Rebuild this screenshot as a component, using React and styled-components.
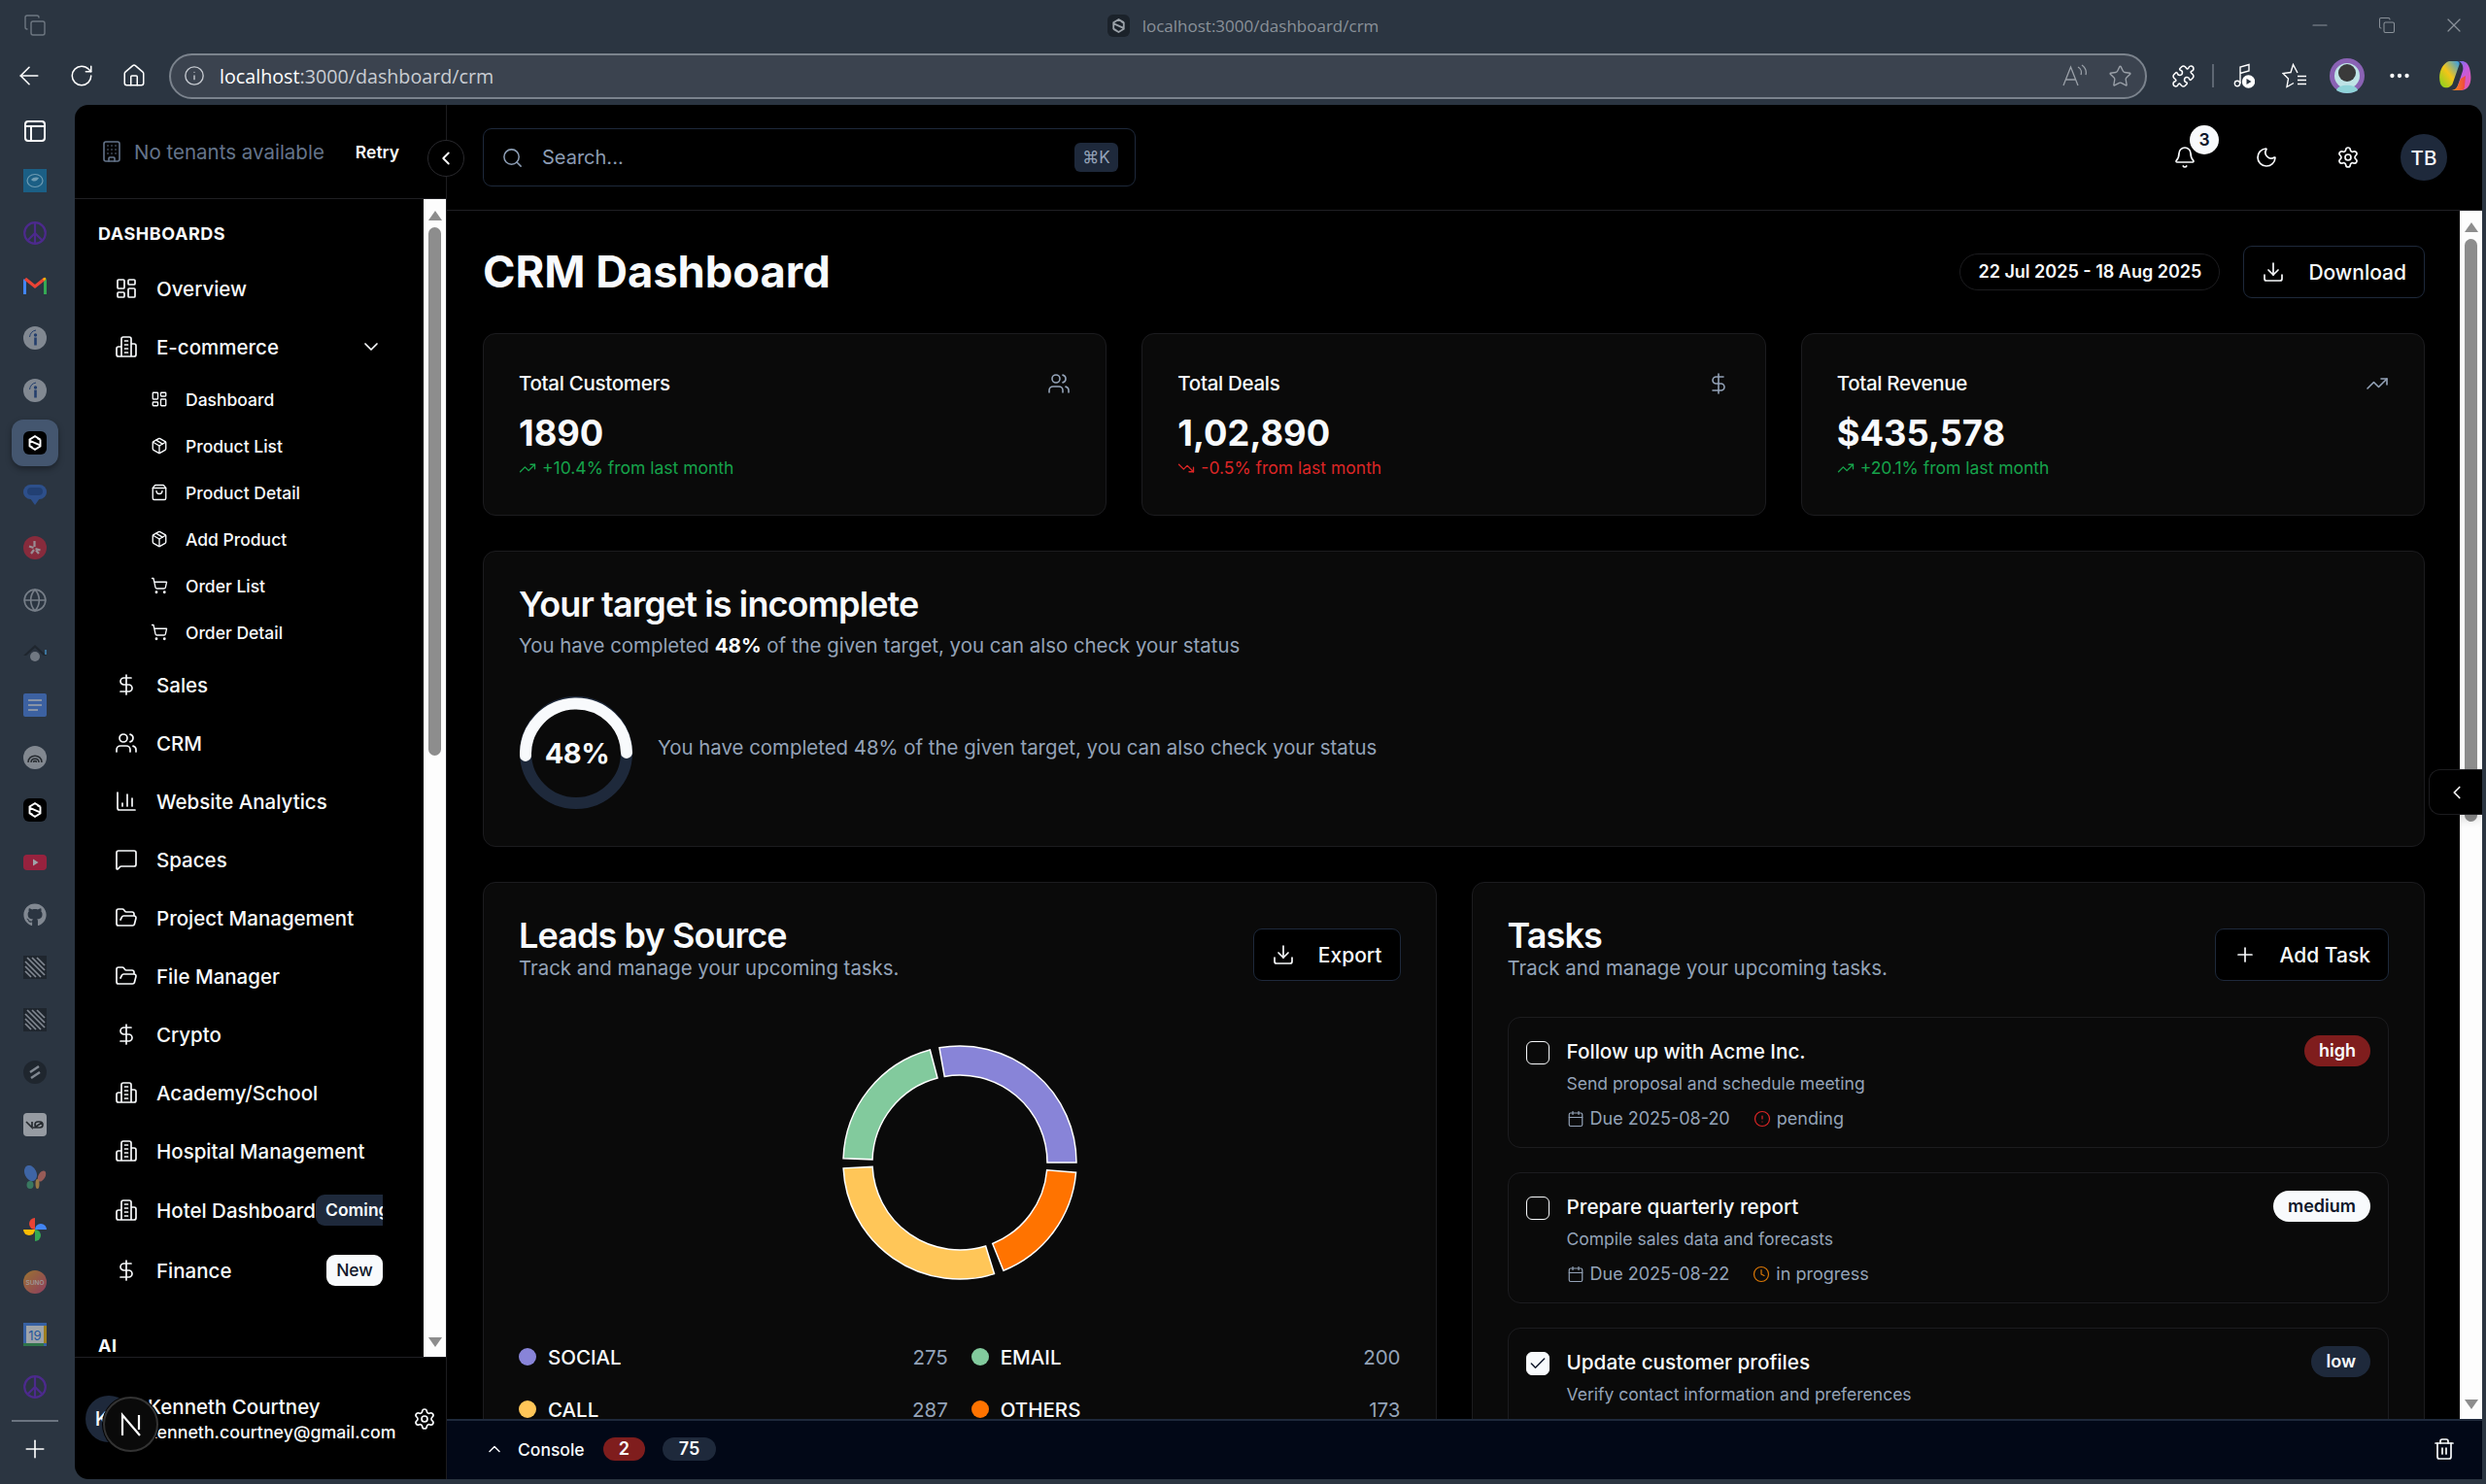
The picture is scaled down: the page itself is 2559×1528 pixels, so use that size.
import React from "react";
import styled, { createGlobalStyle } from "styled-components";
import {
  ArrowLeft, RotateCw, House, Info, Star, Puzzle, Ellipsis, Minus, X, Copy, Building, ChevronLeft, ChevronDown, ChevronUp,
  LayoutDashboard, Package, ShoppingBag, ShoppingCart, DollarSign, Users, ChartColumn, MessageSquare, FolderOpen,
  Settings, Search, Bell, Moon, Download, Plus, TrendingUp, TrendingDown, Calendar, CircleAlert, Clock, Check, Trash2, Globe,
} from "lucide-react";
import { FaGithub } from "react-icons/fa";

const GlobalStyle = createGlobalStyle`
  html, body { margin: 0; padding: 0; background: #2b3541; }
  * { box-sizing: border-box; }
  body { font-family: Inter, "Liberation Sans", sans-serif; color: #f8fafc; }
`;

const Windowed = styled.div`
  width: 2559px;
  height: 1528px;
  display: flex;
  flex-direction: column;
  overflow: hidden;
  background: #2b3541;
`;

/* browser chrome */
const TabStrip = styled.div`
  height: 52px;
  display: grid;
  grid-template-columns: 1fr auto 1fr;
  align-items: center;
  color: #8a9199;
`;
const TabsButton = styled.div`
  padding-left: 24px;
  display: flex;
  color: #6e7781;
`;
const PageTitle = styled.div`
  display: flex;
  align-items: center;
  gap: 13px;
  font: 400 17px "Open Sans", sans-serif;
`;
const WindowControls = styled.div`
  display: flex;
  justify-content: flex-end;
  align-items: center;
  gap: 48px;
  padding-right: 21px;
`;
const Toolbar = styled.div`
  height: 56px;
  display: flex;
  align-items: center;
  padding: 0 0 4px 3px;
`;
const ToolButton = styled.div`
  width: ${({ $w }) => $w || 52}px;
  height: 44px;
  flex: none;
  display: flex;
  align-items: center;
  justify-content: center;
  color: #fff;
`;
const AddressBar = styled.div`
  flex: 1;
  height: 47px;
  margin: 0 11px 0 9px;
  padding: 0 2px 0 13px;
  display: flex;
  align-items: center;
  border: 2px solid #7b838d;
  border-radius: 24px;
  background: #3b434f;
  color: #c6cad0;
`;
const Url = styled.div`
  margin-left: 15px;
  flex: 1;
  font: 400 19.7px "Open Sans", sans-serif;
  color: #c9cdd3;
  b { font-weight: 400; color: #fff; }
`;
const ToolDivider = styled.div`
  width: 2px;
  height: 24px;
  margin: 0 4px;
  background: #5d6672;
`;

/* left rail of the browser */
const Body = styled.div`
  flex: 1;
  min-height: 0;
  display: flex;
  padding: 0 4px 5px 0;
`;
const Rail = styled.div`
  width: 77px;
  flex: none;
  margin-top: -3px;
  padding-right: 5px;
  display: flex;
  flex-direction: column;
  align-items: center;
`;
const RailItem = styled.div`
  width: 48px;
  height: 54px;
  flex: none;
  display: flex;
  align-items: center;
  justify-content: center;
  opacity: ${({ $dim }) => ($dim ? 0.55 : 1)};
  &:first-child { padding-top: 6px; }
`;
const ActiveRailItem = styled.div`
  width: 48px;
  height: 48px;
  display: flex;
  align-items: center;
  justify-content: center;
  background: #44566f;
  border-radius: 12px;
  box-shadow: 0 3px 6px rgba(0, 0, 0, 0.35);
`;
const RailDivider = styled.div`
  width: 48px;
  height: 2px;
  margin: 7px 0 13px;
  background: #6b7480;
`;

/* app frame */
const AppFrame = styled.div`
  flex: 1;
  min-width: 0;
  display: flex;
  background: #000;
  border-radius: 14px 14px 0 14px;
  overflow: hidden;
`;
const Sidebar = styled.aside`
  width: 383px;
  flex: none;
  position: relative;
  display: flex;
  flex-direction: column;
  border-right: 1px solid #1c1c1f;
`;
const TenantHeader = styled.div`
  height: 97px;
  flex: none;
  display: flex;
  align-items: center;
  gap: 11px;
  padding-left: 26px;
  border-bottom: 1px solid #1f1f23;
  color: #64748b;
`;
const TenantText = styled.span`
  font-size: 20.5px;
  white-space: nowrap;
`;
const RetryText = styled.span`
  margin-left: 21px;
  font-size: 17.5px;
  font-weight: 600;
  color: #f8fafc;
`;
const CollapseButton = styled.div`
  position: absolute;
  top: 36px;
  right: -19px;
  width: 38px;
  height: 38px;
  z-index: 3;
  display: flex;
  align-items: center;
  justify-content: center;
  background: #000;
  border: 1px solid #29292d;
  border-radius: 50%;
  color: #fff;
`;
const NavArea = styled.div`
  flex: 1;
  min-height: 0;
  display: flex;
`;
const NavScroll = styled.nav`
  flex: 1;
  min-width: 0;
  overflow: hidden;
  padding: 20px 42px 0 24px;
`;
const SectionLabel = styled.div`
  height: 32px;
  line-height: 32px;
  font-size: 18px;
  font-weight: 700;
  letter-spacing: 0.55px;
  color: #f8fafc;
  margin-top: ${({ $top }) => $top || 0}px;
  margin-bottom: 10px;
`;
const NavRow = styled.div`
  height: ${({ $h }) => $h || 60}px;
  display: flex;
  align-items: center;
  gap: 19px;
  padding-left: 17px;
  overflow: hidden;
  font-size: 20.5px;
  font-weight: 500;
  white-space: nowrap;
  color: #f8fafc;
  svg { flex: none; }
`;
const SubRow = styled(NavRow)`
  height: 48px;
  padding-left: 54px;
  gap: 18px;
  font-size: 17.5px;
`;
const Chevron = styled.span`
  margin-left: auto;
  display: flex;
`;
const ComingBadge = styled.span`
  flex: none;
  margin-left: -19px;
  padding: 0 10px;
  height: 32px;
  line-height: 32px;
  font-size: 17.5px;
  font-weight: 600;
  border-radius: 9px;
  background: #1e293b;
  color: #f8fafc;
`;
const NewBadge = styled.span`
  margin-left: auto;
  width: 58px;
  height: 32px;
  line-height: 32px;
  text-align: center;
  font-size: 17.5px;
  font-weight: 500;
  border-radius: 9px;
  background: #f8fafc;
  color: #0f172a;
`;

/* classic scrollbars */
const ScrollTrack = styled.div`
  width: 23px;
  flex: none;
  display: flex;
  flex-direction: column;
  align-items: center;
  background: #fdfdfd;
  padding: 12px 0 10px;
`;
const Arrow = styled.div`
  flex: none;
  width: 0;
  height: 0;
  border-left: 7px solid transparent;
  border-right: 7px solid transparent;
  ${({ $down }) => ($down ? "border-top: 10px solid #8d8d8d;" : "border-bottom: 10px solid #8d8d8d;")}
`;
const Thumb = styled.div`
  width: 13px;
  flex: none;
  height: ${({ $h }) => $h}px;
  margin-top: ${({ $m }) => $m || 6}px;
  background: #8d8d8d;
  border-radius: 7px;
`;
const TrackGap = styled.div`
  flex: 1;
`;

/* sidebar footer */
const UserFooter = styled.div`
  height: 126px;
  flex: none;
  position: relative;
  display: flex;
  align-items: center;
  padding-left: 11px;
  border-top: 1px solid #1f1f23;
`;
const UserAvatar = styled.div`
  width: 48px;
  height: 48px;
  flex: none;
  border-radius: 50%;
  background: #1e293b;
  display: flex;
  align-items: center;
  justify-content: center;
  font-size: 20.5px;
  font-weight: 500;
`;
const UserText = styled.div`
  margin-left: 16px;
  flex: 1;
`;
const UserName = styled.div`
  font-size: 20.5px;
  line-height: 27px;
  font-weight: 500;
`;
const UserMail = styled.div`
  font-size: 17.8px;
  line-height: 24px;
  font-weight: 500;
  margin-top: 1px;
`;
const FooterGear = styled.div`
  display: flex;
  margin-right: 10px;
`;
const DevIndicator = styled.div`
  position: absolute;
  left: 29px;
  top: 40px;
  width: 57px;
  height: 57px;
  border-radius: 50%;
  background: #0a0a0a;
  border: 2px solid #333;
  display: flex;
  align-items: center;
  justify-content: center;
  box-shadow: 0 0 0 1px #000;
`;

/* main column */
const Main = styled.main`
  flex: 1;
  min-width: 0;
  position: relative;
  display: flex;
  flex-direction: column;
`;
const Topbar = styled.header`
  height: 109px;
  flex: none;
  display: flex;
  align-items: center;
  padding: 0 36px 0 37px;
  border-bottom: 1px solid #1f1f23;
`;
const SearchBox = styled.div`
  width: 672px;
  height: 60px;
  display: flex;
  align-items: center;
  padding: 0 17px 0 18px;
  gap: 19px;
  border: 1px solid #1e293b;
  border-radius: 9px;
  color: #8b9cb3;
  font-size: 20px;
`;
const Kbd = styled.span`
  margin-left: auto;
  width: 45px;
  height: 30px;
  line-height: 30px;
  text-align: center;
  font-size: 17px;
  border-radius: 6px;
  background: #1e293b;
  color: #94a3b8;
`;
const TopActions = styled.div`
  margin-left: auto;
  display: flex;
  align-items: center;
  gap: 24px;
`;
const IconButton = styled.div`
  position: relative;
  width: 60px;
  height: 60px;
  display: flex;
  align-items: center;
  justify-content: center;
  color: #f8fafc;
`;
const CountBadge = styled.span`
  position: absolute;
  top: -3px;
  right: -5px;
  width: 30px;
  height: 30px;
  line-height: 30px;
  text-align: center;
  border-radius: 50%;
  font-size: 17.5px;
  font-weight: 600;
  background: #f8fafc;
  color: #0f172a;
`;
const ScrollRow = styled.div`
  flex: 1;
  min-height: 0;
  display: flex;
`;
const Page = styled.div`
  flex: 1;
  min-width: 0;
  overflow: hidden;
  padding: 36px 36px 0 37px;
  display: flex;
  flex-direction: column;
  gap: 36px;
`;
const TitleRow = styled.div`
  display: flex;
  align-items: center;
  gap: 24px;
  flex: none;
`;
const PageHeading = styled.h1`
  margin: 0 auto 0 0;
  font-size: 45.3px;
  line-height: 54px;
  font-weight: 700;
`;
const DatePill = styled.div`
  height: 38px;
  line-height: 36px;
  padding: 0 18px;
  border: 1px solid #1c1c1f;
  border-radius: 19px;
  font-size: 18px;
  font-weight: 600;
  white-space: nowrap;
`;
const OutlineButton = styled.div`
  flex: none;
  height: 54px;
  display: flex;
  align-items: center;
  gap: 24px;
  padding: 0 18px;
  border: 1px solid #1e293b;
  border-radius: 9px;
  background: #000;
  font-size: 21px;
  font-weight: 500;
  white-space: nowrap;
`;
const StatGrid = styled.div`
  flex: none;
  display: grid;
  grid-template-columns: repeat(3, 1fr);
  gap: 36px;
`;
const Card = styled.section`
  flex: none;
  background: #0a0a0a;
  border: 1px solid #1c1c1f;
  border-radius: 13px;
  padding: 36px;
`;
const StatHead = styled.div`
  height: 42px;
  display: flex;
  justify-content: space-between;
  font-size: 20.5px;
  font-weight: 500;
  line-height: 30px;
  color: #94a3b8;
  span { color: #f8fafc; letter-spacing: -0.3px; }
  svg { margin-top: 3px; }
`;
const StatValue = styled.div`
  font-size: 36.3px;
  line-height: 48px;
  font-weight: 700;
`;
const StatDelta = styled.div`
  display: flex;
  align-items: center;
  gap: 6px;
  font-size: 17.5px;
  line-height: 24px;
  color: ${({ $down }) => ($down ? "#dc2626" : "#16a34a")};
`;
const CardTitle = styled.h2`
  margin: 0;
  font-size: 36px;
  line-height: 36px;
  font-weight: 600;
  letter-spacing: -0.9px;
`;
const CardSub = styled.p`
  margin: ${({ $gap }) => $gap || 0}px 0 0;
  font-size: 20.4px;
  line-height: 32px;
  color: #94a3b8;
  b { color: #f8fafc; font-weight: 700; }
`;
const TargetRow = styled.div`
  margin-top: 36px;
  height: 118px;
  display: flex;
  align-items: center;
  gap: 26px;
  padding-left: 1px;
`;
const Ring = styled.div`
  position: relative;
  width: 116px;
  height: 116px;
  flex: none;
  align-self: flex-start;
`;
const RingLabel = styled.div`
  position: absolute;
  inset: 0;
  padding-left: 2px;
  display: flex;
  align-items: center;
  justify-content: center;
  font-size: 29px;
  font-weight: 700;
  letter-spacing: -0.4px;
`;
const TargetText = styled.div`
  padding-bottom: 14px;
  font-size: 20.4px;
  color: #94a3b8;
`;
const TwoCols = styled.div`
  flex: none;
  display: grid;
  grid-template-columns: 1fr 1fr;
  gap: 36px;
`;
const CardHead = styled.div`
  display: flex;
  justify-content: space-between;
  align-items: flex-start;
`;
const HeadButton = styled(OutlineButton)`
  margin-top: 11px;
`;
const DonutBox = styled.div`
  margin-top: 34px;
  height: 300px;
  display: flex;
  justify-content: center;
`;
const Legend = styled.div`
  margin-top: 35px;
  display: grid;
  grid-template-columns: 1fr 1fr;
  gap: 24px;
`;
const LegendItem = styled.div`
  display: flex;
  align-items: center;
  height: 30px;
  gap: 12px;
  font-size: 20.5px;
  font-weight: 500;
`;
const Dot = styled.i`
  width: 18px;
  height: 18px;
  border-radius: 50%;
  background: ${({ $c }) => $c};
`;
const LegendValue = styled.span`
  margin-left: auto;
  font-weight: 400;
  color: #94a3b8;
`;
const TaskList = styled.div`
  margin-top: 34px;
  display: flex;
  flex-direction: column;
  gap: 25px;
`;
const TaskCard = styled.div`
  height: 135px;
  flex: none;
  display: flex;
  gap: 18px;
  padding: 18px;
  border: 1px solid #1c1c1f;
  border-radius: 13px;
`;
const TaskCheck = styled.div`
  width: 24px;
  height: 24px;
  margin-top: 6px;
  flex: none;
  display: flex;
  align-items: center;
  justify-content: center;
  border: 1.5px solid #f8fafc;
  border-radius: 6px;
  background: ${({ $on }) => ($on ? "#f8fafc" : "transparent")};
  color: #0f172a;
`;
const TaskBody = styled.div`
  flex: 1;
  min-width: 0;
`;
const TaskTop = styled.div`
  height: 32px;
  display: flex;
  align-items: center;
  justify-content: space-between;
  font-size: 20.7px;
  font-weight: 500;
`;
const Priority = styled.span`
  height: 32px;
  line-height: 32px;
  padding: 0 15px;
  border-radius: 16px;
  font-size: 18px;
  font-weight: 600;
  background: ${({ $bg }) => $bg};
  color: ${({ $fg }) => $fg};
`;
const TaskDesc = styled.div`
  margin-top: 6px;
  font-size: 17.5px;
  line-height: 24px;
  color: #94a3b8;
`;
const TaskMeta = styled.div`
  margin-top: 12px;
  display: flex;
  align-items: center;
  font-size: 18px;
  line-height: 24px;
  color: #94a3b8;
`;
const MetaBit = styled.span`
  display: flex;
  align-items: center;
  gap: 6px;
  margin-right: 24px;
`;
const ConsoleBar = styled.footer`
  height: 62px;
  flex: none;
  display: flex;
  align-items: center;
  padding: 0 27px 2px 39px;
  background: #020817;
  border-top: 2px solid #1e293b;
  font-size: 17.5px;
  font-weight: 500;
`;
const ConsoleLabel = styled.span`
  margin: 0 19px 0 14px;
`;
const ConsoleCount = styled.span`
  height: 24px;
  line-height: 24px;
  padding: 0 ${({ $pad }) => $pad}px;
  margin-right: 18px;
  border-radius: 12px;
  font-size: 18px;
  font-weight: 600;
  background: ${({ $bg }) => $bg};
`;
const ConsoleTrash = styled.div`
  margin-left: auto;
  display: flex;
`;
const SideTab = styled.div`
  position: absolute;
  right: 0;
  top: 684px;
  width: 55px;
  height: 47px;
  display: flex;
  align-items: center;
  padding-left: 17px;
  background: #000;
  border: 1px solid #1c1c1f;
  border-right: 0;
  border-radius: 12px 0 0 12px;
  box-shadow: 0 6px 8px rgba(0, 0, 0, 0.12);
  color: #fff;
`;

/* drawn brand marks and icons the packages lack */
const Mark = ({ size = 24, bg = "#000", fg = "#fff" }) => (
  <svg width={size} height={size} viewBox="0 0 24 24">
    <rect width="24" height="24" rx="6" fill={bg} />
    <path d="M17.5 8.5 12 5.2 6.5 8.5v6.6l3 1.8M6.8 9.8l10.4 4.6M6.5 15.5 12 18.8l5.5-3.3V9l-3-1.8" fill="none" stroke={fg} strokeWidth="1.9" />
  </svg>
);
const Tower = ({ size = 24 }) => (
  <svg width={size} height={size} viewBox="0 0 24 24" fill="none" stroke="currentColor" strokeWidth="1.7" strokeLinecap="round" strokeLinejoin="round">
    <path d="M7 22V4a2 2 0 0 1 2-2h6a2 2 0 0 1 2 2v18M7 12H4a2 2 0 0 0-2 2v6a2 2 0 0 0 2 2h16a2 2 0 0 0 2-2v-9a2 2 0 0 0-2-2h-3M10.500 6h3M10.500 10h3M10.500 14h3M10.500 18h3" />
  </svg>
);
const Peace = () => (
  <svg width="24" height="24" viewBox="0 0 24 24" fill="none" stroke="#4c2a8c" strokeWidth="2.2">
    <circle cx="12" cy="12" r="10.8" />
    <path d="M12 1.500v21M12 12 4.500 19.500M12 12l7.500 7.500" />
  </svg>
);
const InfoBlob = () => (
  <svg width="24" height="24" viewBox="0 0 24 24">
    <circle cx="12" cy="12" r="12" fill="#c8cdd4" />
    <circle cx="12.500" cy="9" r="1.7" fill="#1d4690" />
    <path d="M12.500 11.500v8" stroke="#1d4690" strokeWidth="2.6" />
    <path d="M6.500 11C7 7 9.500 4.500 13 4" stroke="#1d4690" fill="none" strokeWidth="1" />
  </svg>
);
const Stripes = () => (
  <svg width="24" height="24" viewBox="0 0 24 24">
    <rect width="24" height="24" fill="#161a20" />
    <path d="M4 2l18 18M2 6l16 16M9 2l13 13M2 11l11 11M14 2l8 8M2 16l6 6" stroke="#c8cdd4" strokeWidth="1.7" />
  </svg>
);

// every entry of the browser's vertical tab strip, top to bottom
const railIcons = [
  { art: <svg width="22" height="22" viewBox="0 0 22 22" fill="none" stroke="#fff" strokeWidth="2"><rect x="1" y="1" width="20" height="20" rx="3" /><path d="M1 6h20M7 6v15" /></svg> },
  { art: <svg width="24" height="24" viewBox="0 0 24 24"><rect width="24" height="24" fill="#1b5f85" /><ellipse cx="12" cy="12" rx="8" ry="6.5" fill="none" stroke="#6e9bb2" strokeWidth="1.2" /><path d="M8 11c2-3 6-3 8-2-1 3-5 5-8 2z" fill="#6e9bb2" /></svg> },
  { art: <Peace /> },
  { art: <svg width="24" height="20" viewBox="0 0 24 20" fill="none"><path d="M1.500 19V3.500" stroke="#4285f4" strokeWidth="3" /><path d="M22.500 19V3.500" stroke="#34a853" strokeWidth="3" /><path d="M2 3l10 8 10-8" stroke="#ea4335" strokeWidth="3.200" /><path d="M21 2.500l1.500 1.500" stroke="#fbbc04" strokeWidth="3" /></svg> },
  { art: <InfoBlob />, dim: true },
  { art: <InfoBlob />, dim: true },
  { active: true },
  { art: <svg width="24" height="24" viewBox="0 0 24 24"><rect y="1" width="24" height="15" rx="7.5" fill="#2f66c8" /><path d="M7 15h10l-5 7z" fill="#2f66c8" /><rect x="4" y="4" width="16" height="8" rx="4" fill="#1c4a9c" /></svg>, dim: true },
  { art: <svg width="24" height="24" viewBox="0 0 24 24"><circle cx="12" cy="12" r="12" fill="#d32338" /><path d="M11.500 5v6M12.500 13l5 1.500M11 14l-3 4M13 14.500l3 3.500M10.500 12 6 10.500" stroke="#f4d5d9" strokeWidth="2.2" /></svg>, dim: true },
  { art: <Globe size={26} color="#b4bac2" strokeWidth={1.5} />, dim: true },
  { art: <svg width="24" height="24" viewBox="0 0 24 24"><path d="M0 15 12 4l12 11-3 0L12 7 3 15z" fill="#161a20" /><circle cx="12" cy="16" r="5" fill="#aab0b8" /><rect x="22" y="9" width="2" height="5" fill="#4aa8e8" /></svg>, dim: true },
  { art: <svg width="24" height="24" viewBox="0 0 24 24"><rect width="24" height="24" rx="2" fill="#4a86f0" /><path d="M5 7h14M5 12h14M5 17h10" stroke="#d3e1fa" strokeWidth="2.2" /></svg>, dim: true },
  { art: <svg width="24" height="24" viewBox="0 0 24 24" fill="none" stroke="#222" strokeWidth="1.5"><circle cx="12" cy="12" r="12" fill="#c9cdd2" stroke="none" /><path d="M5 17c0-9 14-9 14 0M8 17c0-5 8-5 8 0M10.500 17c0-2 3-2 3 0" /></svg>, dim: true },
  { art: <Mark /> },
  { art: <svg width="24" height="16" viewBox="0 0 24 16"><rect width="24" height="16" rx="4" fill="#f0143c" /><path d="M10 4.500v7l5.500-3.500z" fill="#fff" /></svg>, dim: true },
  { art: <FaGithub size={24} color="#c8cdd4" />, dim: true },
  { art: <Stripes />, dim: true },
  { art: <Stripes />, dim: true },
  { art: <svg width="24" height="24" viewBox="0 0 24 24"><circle cx="12" cy="12" r="12" fill="#161a20" /><path d="M7 12l9-6M8 18l9-6" stroke="#c8cdd4" strokeWidth="2.4" /></svg>, dim: true },
  { art: <svg width="24" height="24" viewBox="0 0 24 24"><rect width="24" height="24" rx="4" fill="#eef0f2" /><path d="M3 9l6 6V9M10 15h7a2.500 2.500 0 0 0 0-6h-2a2.500 2.500 0 0 0 0 6M13 14l6-4" fill="none" stroke="#222" strokeWidth="1.7" /></svg>, dim: true },
  { art: <svg width="24" height="24" viewBox="0 0 24 24"><ellipse cx="7.500" cy="8" rx="6" ry="8.500" transform="rotate(-25 7.500 8)" fill="#4f8df7" /><ellipse cx="19" cy="11" rx="3.500" ry="6" transform="rotate(30 19 11)" fill="#f07a6a" /><ellipse cx="7" cy="20" rx="3.500" ry="4" fill="#46b07a" /><ellipse cx="14.500" cy="19" rx="2" ry="5" fill="#f2b04a" /></svg>, dim: true },
  { art: <svg width="24" height="24" viewBox="0 0 24 24"><path d="M12 12A6 6 0 0 1 12 0z" fill="#ea4335" /><path d="M12 12a6 6 0 0 1 12 0z" fill="#4285f4" /><path d="M12 12a6 6 0 0 1 0 12z" fill="#34a853" /><path d="M12 12A6 6 0 0 1 0 12z" fill="#fbbc04" /></svg> },
  { art: <svg width="24" height="24" viewBox="0 0 24 24"><defs><linearGradient id="suno" x1="0" y1="0" x2="1" y2="1"><stop offset="0" stopColor="#f5a623" /><stop offset="1" stopColor="#e0457b" /></linearGradient></defs><circle cx="12" cy="12" r="12" fill="url(#suno)" /><text x="12" y="14.5" textAnchor="middle" fontSize="6.5" fontFamily="Inter" fill="#fff">SUNO</text></svg>, dim: true },
  { art: <svg width="24" height="24" viewBox="0 0 24 24"><rect width="24" height="24" fill="#4285f4" /><rect x="3" y="3" width="18" height="18" fill="#fff" /><rect y="21" width="21" height="3" fill="#34a853" /><rect x="21" y="3" width="3" height="18" fill="#fbbc04" /><text x="12" y="17.5" textAnchor="middle" fontSize="13" fontFamily="Inter" fill="#1a73e8">19</text></svg>, dim: true },
  { art: <Peace /> },
];

const donut = [
  { c: "#8884d8", from: -10.1, to: 90 },
  { c: "#ff7300", from: 94.9, to: 158 },
  { c: "#ffc658", from: 162.8, to: 267.2 },
  { c: "#82ca9d", from: 272, to: 345.2 },
];
const polar = (r, deg) => {
  const a = (deg * Math.PI) / 180;
  return `${(150 + r * Math.sin(a)).toFixed(2)} ${(150 - r * Math.cos(a)).toFixed(2)}`;
};
const slicePath = ({ from, to }) => {
  const large = to - from > 180 ? 1 : 0;
  return `M${polar(120, from)}A120 120 0 ${large} 1 ${polar(120, to)}L${polar(90, to)}A90 90 0 ${large} 0 ${polar(90, from)}Z`;
};

const shop = [
  { icon: LayoutDashboard, label: "Dashboard" },
  { icon: Package, label: "Product List" },
  { icon: ShoppingBag, label: "Product Detail" },
  { icon: Package, label: "Add Product" },
  { icon: ShoppingCart, label: "Order List" },
  { icon: ShoppingCart, label: "Order Detail" },
];
const navRest = [
  { icon: DollarSign, label: "Sales" },
  { icon: Users, label: "CRM" },
  { icon: ChartColumn, label: "Website Analytics" },
  { icon: MessageSquare, label: "Spaces" },
  { icon: FolderOpen, label: "Project Management" },
  { icon: FolderOpen, label: "File Manager" },
  { icon: DollarSign, label: "Crypto" },
  { icon: Tower, label: "Academy/School" },
  { icon: Tower, label: "Hospital Management" },
];
const stats = [
  { label: "Total Customers", icon: Users, value: "1890", delta: "+10.4% from last month" },
  { label: "Total Deals", icon: DollarSign, value: "1,02,890", delta: "-0.5% from last month", down: true },
  { label: "Total Revenue", icon: TrendingUp, value: "$435,578", delta: "+20.1% from last month" },
];
const legend = [
  { c: "#8884d8", name: "SOCIAL", n: 275 },
  { c: "#82ca9d", name: "EMAIL", n: 200 },
  { c: "#ffc658", name: "CALL", n: 287 },
  { c: "#ff7300", name: "OTHERS", n: 173 },
];
const tasks = [
  { title: "Follow up with Acme Inc.", desc: "Send proposal and schedule meeting", due: "Due 2025-08-20", status: "pending", statusIcon: CircleAlert, statusColor: "#dc2626", level: "high", bg: "#7f1d1d", fg: "#f8fafc" },
  { title: "Prepare quarterly report", desc: "Compile sales data and forecasts", due: "Due 2025-08-22", status: "in progress", statusIcon: Clock, statusColor: "#d97706", level: "medium", bg: "#f8fafc", fg: "#0f172a" },
  { title: "Update customer profiles", desc: "Verify contact information and preferences", due: "Due 2025-08-25", status: "completed", statusIcon: Check, statusColor: "#16a34a", level: "low", bg: "#1e293b", fg: "#f8fafc", done: true },
];

const FakeScrollbar = ({ thumb, topGap }) => (
  <ScrollTrack>
    <Arrow />
    <Thumb $h={thumb} $m={topGap} />
    <TrackGap />
    <Arrow $down />
  </ScrollTrack>
);

const App = () => (
  <Windowed>
    <GlobalStyle />
    <TabStrip>
      <TabsButton>
        <Copy size={24} strokeWidth={1.4} />
      </TabsButton>
      <PageTitle>
        <Mark size={23} bg="#1b222a" fg="#9aa1a8" />
        localhost:3000/dashboard/crm
      </PageTitle>
      <WindowControls>
        <Minus size={24} strokeWidth={1.2} />
        <Copy size={18} strokeWidth={1.4} />
        <X size={24} strokeWidth={1.2} />
      </WindowControls>
    </TabStrip>
    <Toolbar>
      <ToolButton $w={54}><ArrowLeft size={30} strokeWidth={1.3} /></ToolButton>
      <ToolButton $w={54}><RotateCw size={26} strokeWidth={1.4} /></ToolButton>
      <ToolButton $w={54}><House size={26} strokeWidth={1.4} /></ToolButton>
      <AddressBar>
        <Info size={22} strokeWidth={1.5} />
        <Url><b>localhost</b>:3000/dashboard/crm</Url>
        <ToolButton $w={47}><svg width="26" height="24" viewBox="0 0 26 24" fill="none" stroke="#9ba1a9" strokeWidth="1.3"><path d="M1 22 8.500 3 16 22M3.500 16h10M16 3c3 1.500 4 5 3 8M20 1c3.500 2.500 5 6 4 10" /></svg></ToolButton>
        <ToolButton $w={47}><Star size={25} strokeWidth={1.3} color="#9ba1a9" /></ToolButton>
      </AddressBar>
      <ToolButton><Puzzle size={25} strokeWidth={1.5} /></ToolButton>
      <ToolDivider />
      <ToolButton $w={54}>
        <svg width="22" height="26" viewBox="0 0 22 26" fill="none" stroke="#fff" strokeWidth="1.4"><circle cx="4" cy="21" r="2.700" /><path d="M7 21V4l9-2.500V8l-9 2.500" /><circle cx="15.500" cy="19" r="6" fill="#fff" /><path d="M13.500 16v6l5-3z" fill="#2b3541" stroke="none" /></svg>
      </ToolButton>
      <ToolButton $w={50}>
        <svg width="26" height="26" viewBox="0 0 26 26" fill="none" stroke="#fff" strokeWidth="1.4"><path d="M16 10 11.500 1.500 9 9.500 1 10.500l5.500 5.500-1.500 8.500 7-4M16 13.500h9M16 17.500h9M16 21.500h9" /></svg>
      </ToolButton>
      <ToolButton $w={58}>
        <svg width="36" height="36" viewBox="0 0 36 36">
          <circle cx="18" cy="18" r="18" fill="#8a62b4" />
          <circle cx="18" cy="18" r="13" fill="#bfe3e6" />
          <circle cx="18" cy="15" r="9" fill="#3a3a3a" />
          <path d="M7 33c1-7 21-7 22 0-6 4-16 4-22 0z" fill="#8fd3d8" />
        </svg>
      </ToolButton>
      <ToolButton $w={50}><Ellipsis size={26} strokeWidth={2} /></ToolButton>
      <ToolButton $w={64}>
        <svg width="34" height="32" viewBox="0 0 34 32">
          <defs>
            <linearGradient id="copilotA" x1="0" y1="1" x2="1" y2="0"><stop offset="0" stopColor="#7ed321" /><stop offset="0.5" stopColor="#f5c518" /><stop offset="1" stopColor="#2d9bf0" /></linearGradient>
            <linearGradient id="copilotB" x1="0" y1="0" x2="1" y2="1"><stop offset="0" stopColor="#3b82f6" /><stop offset="0.5" stopColor="#c35be0" /><stop offset="1" stopColor="#f0569c" /></linearGradient>
            <linearGradient id="copilotC" x1="0" y1="0" x2="1" y2="0"><stop offset="0" stopColor="#f59e0b" /><stop offset="1" stopColor="#ef4444" /></linearGradient>
          </defs>
          <path d="M2 24C-1 14 4 3 11 1h8c3 0 3 3 2 5l-6 17c-1 4-5 6-9 5-2-.5-3-2-4-4z" fill="url(#copilotA)" />
          <path d="M21 1h3c5 0 8 4 9 12 1 7 0 11-2 14-2 3-6 4-9 4h-8c3 0 5-2 6-5l5-15c1-4 0-8-4-10z" fill="url(#copilotB)" />
          <path d="M12 31h10c3 0 5-1 5-4l1-11-5 3-3 7c-1 3-4 5-8 5z" fill="url(#copilotC)" />
        </svg>
      </ToolButton>
    </Toolbar>
    <Body>
      <Rail>
        {railIcons.map(({ art, dim, active }, i) => (
          <RailItem key={i} $dim={dim}>
            {active ? <ActiveRailItem><Mark /></ActiveRailItem> : art}
          </RailItem>
        ))}
        <RailDivider />
        <Plus size={30} color="#fff" strokeWidth={1.3} />
      </Rail>
      <AppFrame>
        <Sidebar>
          <TenantHeader>
            <Building size={24} strokeWidth={1.6} />
            <TenantText>No tenants available</TenantText>
            <RetryText>Retry</RetryText>
          </TenantHeader>
          <CollapseButton><ChevronLeft size={22} /></CollapseButton>
          <NavArea>
            <NavScroll>
              <SectionLabel>DASHBOARDS</SectionLabel>
              <NavRow><LayoutDashboard size={24} strokeWidth={1.7} />Overview</NavRow>
              <NavRow>
                <Tower />
                E-commerce
                <Chevron><ChevronDown size={24} strokeWidth={1.7} /></Chevron>
              </NavRow>
              {shop.map(({ icon: I, label }) => (
                <SubRow key={label}><I size={18} strokeWidth={1.8} />{label}</SubRow>
              ))}
              {navRest.map(({ icon: I, label }) => (
                <NavRow key={label}><I size={24} strokeWidth={1.7} />{label}</NavRow>
              ))}
              <NavRow $h={62}>
                <Tower />
                Hotel Dashboard
                <ComingBadge>Coming Soon</ComingBadge>
              </NavRow>
              <NavRow $h={62}>
                <DollarSign size={24} strokeWidth={1.7} />
                Finance
                <NewBadge>New</NewBadge>
              </NavRow>
              <SectionLabel $top={31}>AI</SectionLabel>
            </NavScroll>
            <FakeScrollbar thumb={544} topGap={7} />
          </NavArea>
          <UserFooter>
            <UserAvatar>KC</UserAvatar>
            <UserText>
              <UserName>Kenneth Courtney</UserName>
              <UserMail>kenneth.courtney@gmail.com</UserMail>
            </UserText>
            <FooterGear><Settings size={24} strokeWidth={1.7} /></FooterGear>
            <DevIndicator>
              <svg width="26" height="26" viewBox="0 0 26 26" fill="none" stroke="#fff" strokeWidth="2.2"><path d="M4 24V3l18 21M21 3v15" /></svg>
            </DevIndicator>
          </UserFooter>
        </Sidebar>
        <Main>
          <Topbar>
            <SearchBox>
              <Search size={23} strokeWidth={1.6} />
              Search...
              <Kbd>⌘K</Kbd>
            </SearchBox>
            <TopActions>
              <IconButton>
                <Bell size={24} strokeWidth={1.7} />
                <CountBadge>3</CountBadge>
              </IconButton>
              <IconButton><Moon size={24} strokeWidth={1.7} /></IconButton>
              <IconButton><Settings size={24} strokeWidth={1.7} /></IconButton>
              <UserAvatar>TB</UserAvatar>
            </TopActions>
          </Topbar>
          <ScrollRow>
            <Page>
              <TitleRow>
                <PageHeading>CRM Dashboard</PageHeading>
                <DatePill>22 Jul 2025 - 18 Aug 2025</DatePill>
                <OutlineButton><Download size={24} strokeWidth={1.7} />Download</OutlineButton>
              </TitleRow>
              <StatGrid>
                {stats.map(({ label, icon: I, value, delta, down }) => (
                  <Card key={label}>
                    <StatHead><span>{label}</span><I size={24} strokeWidth={1.6} /></StatHead>
                    <StatValue>{value}</StatValue>
                    <StatDelta $down={down}>
                      {down ? <TrendingDown size={18} strokeWidth={1.8} /> : <TrendingUp size={18} strokeWidth={1.8} />}
                      {delta}
                    </StatDelta>
                  </Card>
                ))}
              </StatGrid>
              <Card>
                <CardTitle>Your target is incomplete</CardTitle>
                <CardSub $gap={9}>You have completed <b>48%</b> of the given target, you can also check your status</CardSub>
                <TargetRow>
                  <Ring>
                    <svg width="116" height="116" viewBox="0 0 116 116" fill="none" strokeWidth="12">
                      <circle cx="58" cy="58" r="52" stroke="#1e293b" />
                      <path d="M6 61A52 52 0 1 1 110 58" stroke="#f8fafc" strokeLinecap="round" />
                    </svg>
                    <RingLabel>48%</RingLabel>
                  </Ring>
                  <TargetText>You have completed 48% of the given target, you can also check your status</TargetText>
                </TargetRow>
              </Card>
              <TwoCols>
                <Card>
                  <CardHead>
                    <div>
                      <CardTitle>Leads by Source</CardTitle>
                      <CardSub>Track and manage your upcoming tasks.</CardSub>
                    </div>
                    <HeadButton><Download size={24} strokeWidth={1.7} />Export</HeadButton>
                  </CardHead>
                  <DonutBox>
                    <svg width="300" height="300" viewBox="0 0 300 300">
                      {donut.map((s) => (
                        <path key={s.c} d={slicePath(s)} fill={s.c} stroke="#fff" strokeWidth="1.5" />
                      ))}
                    </svg>
                  </DonutBox>
                  <Legend>
                    {legend.map(({ c, name, n }) => (
                      <LegendItem key={name}>
                        <Dot $c={c} />
                        {name}
                        <LegendValue>{n}</LegendValue>
                      </LegendItem>
                    ))}
                  </Legend>
                </Card>
                <Card>
                  <CardHead>
                    <div>
                      <CardTitle>Tasks</CardTitle>
                      <CardSub>Track and manage your upcoming tasks.</CardSub>
                    </div>
                    <HeadButton><Plus size={24} strokeWidth={1.7} />Add Task</HeadButton>
                  </CardHead>
                  <TaskList>
                    {tasks.map(({ title, desc, due, status, statusIcon: S, statusColor, level, bg, fg, done }) => (
                      <TaskCard key={title}>
                        <TaskCheck $on={done}>{done && <Check size={20} strokeWidth={1.8} />}</TaskCheck>
                        <TaskBody>
                          <TaskTop>
                            {title}
                            <Priority $bg={bg} $fg={fg}>{level}</Priority>
                          </TaskTop>
                          <TaskDesc>{desc}</TaskDesc>
                          <TaskMeta>
                            <MetaBit><Calendar size={18} strokeWidth={1.6} />{due}</MetaBit>
                            <MetaBit><S size={18} strokeWidth={1.6} color={statusColor} />{status}</MetaBit>
                          </TaskMeta>
                        </TaskBody>
                      </TaskCard>
                    ))}
                  </TaskList>
                </Card>
              </TwoCols>
            </Page>
            <FakeScrollbar thumb={600} topGap={7} />
          </ScrollRow>
          <ConsoleBar>
            <ChevronUp size={20} strokeWidth={1.8} />
            <ConsoleLabel>Console</ConsoleLabel>
            <ConsoleCount $bg="#7f1d1d" $pad={16}>2</ConsoleCount>
            <ConsoleCount $bg="#1e293b" $pad={17}>75</ConsoleCount>
            <ConsoleTrash><Trash2 size={24} strokeWidth={1.7} /></ConsoleTrash>
          </ConsoleBar>
          <SideTab><ChevronLeft size={22} strokeWidth={1.8} /></SideTab>
        </Main>
      </AppFrame>
    </Body>
  </Windowed>
);

export default App;
